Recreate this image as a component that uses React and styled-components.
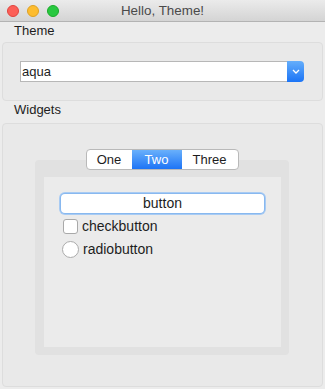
import React, { useState } from 'react';
import styled, { createGlobalStyle } from 'styled-components';

const Global = createGlobalStyle`
  html, body { margin: 0; padding: 0; background: #ececec; }
  body { font-family: "Liberation Sans", Arial, sans-serif; font-size: 13px; color: #1d1d1d; }
`;

const Window = styled.div`
  width: 325px;
  height: 389px;
  display: flex;
  flex-direction: column;
  background: #ececec;
  overflow: hidden;
`;

const TitleBar = styled.div`
  height: 21px;
  flex: none;
  display: flex;
  align-items: center;
  position: relative;
  background: linear-gradient(#ebebeb, #d4d4d4);
  border-bottom: 1px solid #b3b3b3;
`;

const Lights = styled.div`
  display: flex;
  gap: 8px;
  padding-left: 7px;
`;

const Light = styled.span`
  width: 12px;
  height: 12px;
  box-sizing: border-box;
  border-radius: 50%;
  background: ${p => p.$fill};
  border: 0.5px solid ${p => p.$edge};
`;

const Title = styled.div`
  position: absolute;
  left: 0;
  right: 0;
  text-align: center;
  color: #4a4a4a;
  font-size: 13.4px;
`;

const Body = styled.div`
  flex: 1;
  display: flex;
  flex-direction: column;
  padding: 0 2px 2px;
`;

const SectionLabel = styled.div`
  height: ${p => p.$h}px;
  line-height: ${p => p.$lh}px;
  padding-left: 12px;
  font-size: 13px;
  color: #1d1d1d;
`;

const GroupBox = styled.div`
  border: 1px solid #dddddd;
  border-radius: 4px;
  background: #e9e9e9;
  ${p => p.$grow && 'flex: 1;'}
  padding: ${p => p.$pad};
`;

const Combo = styled.div`
  display: flex;
  height: 21px;
`;

const ComboField = styled.div`
  flex: 1;
  background: #fff;
  border: 1px solid #b7b7b7;
  border-right: none;
  line-height: 19px;
  padding-left: 1px;
  font-size: 13px;
`;

const ComboArrow = styled.div`
  width: 17px;
  display: flex;
  align-items: center;
  justify-content: center;
  background: linear-gradient(#65aefb, #1b74f6);
  border-radius: 0 4px 4px 0;
`;

const Notebook = styled.div`
  display: flex;
  flex-direction: column;
  align-items: center;
`;

const Tabs = styled.div`
  display: flex;
  height: 21px;
  margin-bottom: -10px;
  position: relative;
  z-index: 1;
  border: 1px solid #b9b9b9;
  border-radius: 4px;
  background: #fff;
  overflow: hidden;
  box-sizing: border-box;
`;

const Tab = styled.div`
  width: ${p => p.$w}px;
  text-align: center;
  line-height: 19px;
  font-size: 13px;
  color: ${p => (p.$active ? '#fff' : '#1d1d1d')};
  background: ${p => (p.$active ? 'linear-gradient(#69b0fb, #1d74f6)' : 'transparent')};
  cursor: default;
`;

const Pane = styled.div`
  align-self: stretch;
  height: 195px;
  background: #e1e1e1;
  border-radius: 4px;
  padding: 17px 8px 8px 9px;
  box-sizing: border-box;
  display: flex;
`;

const PaneInner = styled.div`
  flex: 1;
  background: #ebebeb;
  padding: 16px 17px 0;
  display: flex;
  flex-direction: column;
`;

const PushButton = styled.div`
  height: 19px;
  line-height: 19px;
  text-align: center;
  background: #fff;
  border-radius: 4px;
  box-shadow: 0 0 0 1px #88b8ef, 0 0 0 2px #a8cbf3;
  margin: 1px 0 1px;
  font-size: 14px;
`;

const Option = styled.label`
  display: flex;
  align-items: center;
  gap: 4px;
  height: ${p => p.$h}px;
  font-size: 14px;
`;

const Box = styled.span`
  width: 13px;
  height: 13px;
  background: #fff;
  border: 1px solid #a9a9a9;
  border-radius: 3px;
  margin-left: 2px;
`;

const Radio = styled.span`
  width: 17px;
  height: 17px;
  box-sizing: border-box;
  background: #fff;
  border: 1px solid #ababab;
  border-radius: 50%;
  margin-left: 1px;
`;

export default function App() {
  const [tab, setTab] = useState('Two');
  const tabs = [
    ['One', 45],
    ['Two', 50],
    ['Three', 56],
  ];

  return (
    <>
      <Global />
      <Window>
        <TitleBar>
          <Lights>
            <Light $fill="#fc5f57" $edge="#e0443e" />
            <Light $fill="#fdbc2e" $edge="#dea123" />
            <Light $fill="#28c840" $edge="#1aab29" />
          </Lights>
          <Title>Hello, Theme!</Title>
        </TitleBar>
        <Body>
          <SectionLabel $h={20} $lh={17}>Theme</SectionLabel>
          <GroupBox $pad="18px 18px 18px 17px">
            <Combo>
              <ComboField>aqua</ComboField>
              <ComboArrow>
                <svg width="8" height="5" viewBox="0 0 8 5">
                  <path d="M1 1 L4 4 L7 1" fill="none" stroke="#fff" strokeWidth="1.3" />
                </svg>
              </ComboArrow>
            </Combo>
          </GroupBox>
          <SectionLabel $h={22} $lh={18}>Widgets</SectionLabel>
          <GroupBox $grow $pad="25px 33px 0 32px">
            <Notebook>
              <Tabs>
                {tabs.map(([name, w]) => (
                  <Tab key={name} $w={w} $active={tab === name} onClick={() => setTab(name)}>
                    {name}
                  </Tab>
                ))}
              </Tabs>
              <Pane>
                <PaneInner>
                  <PushButton>button</PushButton>
                  <Option $h={20} style={{ marginTop: 2 }}>
                    <Box />
                    checkbutton
                  </Option>
                  <Option $h={26}>
                    <Radio />
                    radiobutton
                  </Option>
                </PaneInner>
              </Pane>
            </Notebook>
          </GroupBox>
        </Body>
      </Window>
    </>
  );
}
